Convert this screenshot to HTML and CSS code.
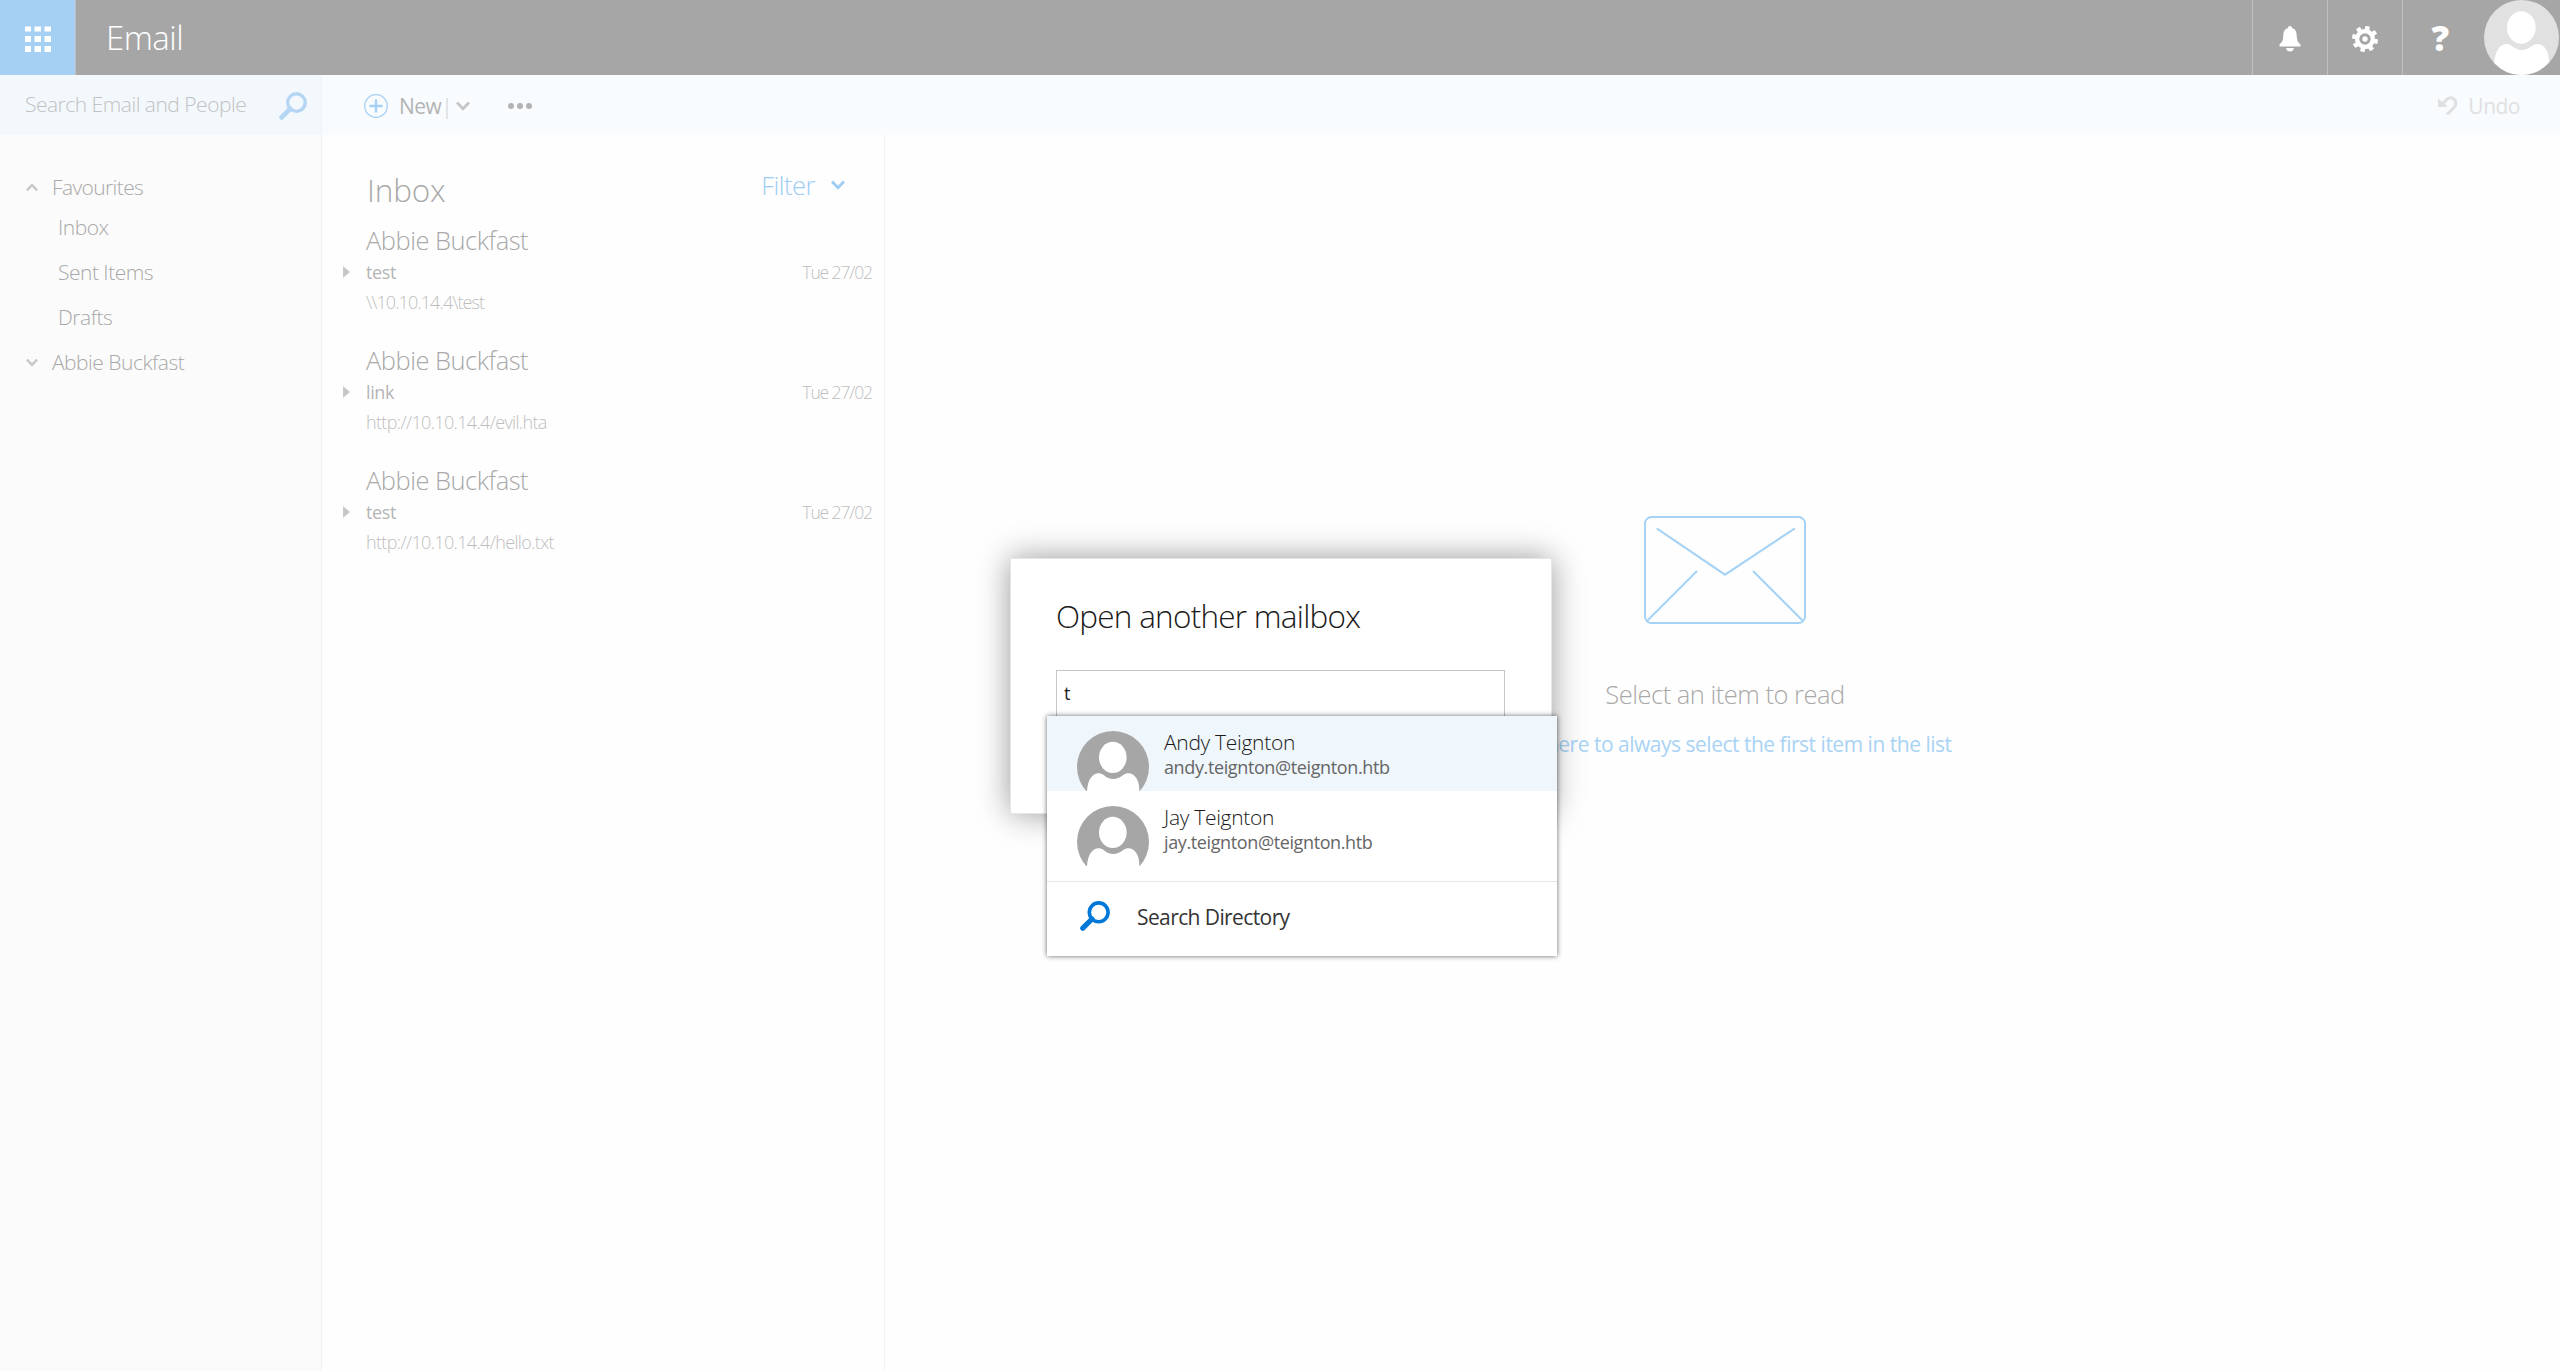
FILE: index.html
```html
<!DOCTYPE html>
<html lang="en-GB">
<head>
<meta charset="utf-8">
<title>Email</title>
<link rel="stylesheet" href="styles.css">
</head>
<body>
<svg class="defs" aria-hidden="true">
  <symbol id="person" viewBox="0 0 75 75">
    <circle cx="37.5" cy="37.5" r="37.5" fill="currentColor"/>
    <g fill="#fff">
      <ellipse cx="37.3" cy="27.5" rx="14.4" ry="16.2"/>
      <path d="M10.4 63C11 52 15 44 23 44C28 44 30 50 37.8 50C45.5 50 48 44 53 44C61 44 65 52 65 62A37.5 37.5 0 0 1 37.5 75A37.5 37.5 0 0 1 10.4 63Z"/>
    </g>
  </symbol>
  <symbol id="magnifier" viewBox="0 0 30 30">
    <circle cx="18.7" cy="11.3" r="9.4" fill="none" stroke="currentColor" stroke-width="3.6"/>
    <path d="M12 18L2.8 27.2" stroke="currentColor" stroke-width="5.2" stroke-linecap="round"/>
  </symbol>
  <symbol id="chevron" viewBox="0 0 14 10">
    <path d="M1 1.5L7 7.8L13 1.5" fill="none" stroke="currentColor" stroke-width="2.8"/>
  </symbol>
</svg>

<header class="topbar">
  <div class="launcher">
    <svg width="26" height="26" viewBox="0 0 26 26" fill="#fff"><path d="M0 .5h6v5H0zM9.5 .5h6.5v5H9.5zM19.5 .5h6.500v5H19.5zM0 10h6v6H0zM9.5 10h6.5v6H9.5zM19.5 10h6.5v6H19.5zM0 20h6v6H0zM9.5 20h6.5v6H9.5zM19.5 20h6.5v6H19.5z"/></svg>
  </div>
  <h1 class="app-name">Email</h1>
  <div class="top-action">
    <svg width="22" height="26" viewBox="0 0 22 26" fill="#fff"><path d="M11 0C12.6 0 13 1.2 13 2C16.5 3 17.5 6 17.7 9C18 14.5 18.5 16 21.5 18.5V20.5H.5V18.5C3.5 16 4 14.5 4.3 9C4.5 6 5.5 3 9 2C9 1.2 9.4 0 11 0ZM7 22H15C14.5 24.5 13 25.5 11 25.5S7.5 24.5 7 22Z"/></svg>
  </div>
  <div class="top-action">
    <svg width="26" height="26" viewBox="-13 -13 26 26"><g fill="#fff" transform="rotate(12)"><g id="teeth"><rect x="-2.3" y="-13" width="4.6" height="26"/><rect x="-13" y="-2.3" width="26" height="4.6"/></g><use href="#teeth" transform="rotate(45)"/><circle r="10"/></g><circle r="4.2" fill="none" stroke="#a6a6a6" stroke-width="3"/></svg>
  </div>
  <div class="top-action help">?</div>
  <svg class="me"><use href="#person"/></svg>
</header>

<div class="commandbar">
  <div class="search"><span>Search Email and People</span><svg class="search-icon"><use href="#magnifier"/></svg></div>
  <div class="commands">
    <svg width="24" height="24" viewBox="0 0 24 24" fill="none" stroke="#a6d0f3"><circle cx="12" cy="12" r="11.3" stroke-width="1.2"/><path d="M5.5 12H18.5M12 5.5V18.5" stroke-width="2.4"/></svg>
    <span class="new">New</span>
    <span class="split"></span>
    <svg class="chev"><use href="#chevron"/></svg>
    <svg class="more" width="24" height="6" viewBox="0 0 24 6" fill="#b3b3b3"><circle cx="3" cy="3" r="3"/><circle cx="12" cy="3" r="3"/><circle cx="21" cy="3" r="3"/></svg>
    <div class="undo">
      <svg width="20" height="20" viewBox="0 0 20 20" fill="none" stroke="#e0e0e0" stroke-width="3"><path d="M3 9.5L8 4.2C10.5 1.2 14 1 16.2 3.2C18.5 5.8 18 9 16 11.5L9 18.5"/><path d="M0 2.5V11H9.5L6.500 7.500L3.500 5.500Z" fill="#e0e0e0" stroke="none"/></svg>
      <span>Undo</span>
    </div>
  </div>
</div>

<div class="workspace">
  <nav class="folders">
    <div class="group first"><svg class="chev small up"><use href="#chevron"/></svg>Favourites</div>
    <a class="folder">Inbox</a>
    <a class="folder">Sent Items</a>
    <a class="folder">Drafts</a>
    <div class="group"><svg class="chev small"><use href="#chevron"/></svg>Abbie Buckfast</div>
  </nav>

  <section class="list">
    <div class="list-head">
      <h2>Inbox</h2>
      <div class="filter">Filter<svg class="chev"><use href="#chevron"/></svg></div>
    </div>
    <article class="mail">
      <div class="from">Abbie Buckfast</div>
      <div class="subject-row"><i class="expand"></i><span class="subject">test</span><time>Tue 27/02</time></div>
      <div class="preview share">\\10.10.14.4\test</div>
    </article>
    <article class="mail">
      <div class="from">Abbie Buckfast</div>
      <div class="subject-row"><i class="expand"></i><span class="subject">link</span><time>Tue 27/02</time></div>
      <div class="preview">http://10.10.14.4/evil.hta</div>
    </article>
    <article class="mail">
      <div class="from">Abbie Buckfast</div>
      <div class="subject-row"><i class="expand"></i><span class="subject">test</span><time>Tue 27/02</time></div>
      <div class="preview">http://10.10.14.4/hello.txt</div>
    </article>
  </section>

  <main class="reading">
    <svg class="envelope" width="162" height="108" viewBox="0 0 162 108" fill="none" stroke="#a6d3f5" stroke-width="2"><rect x="1" y="1" width="160" height="106" rx="6.5"/><path d="M12.7 12.3L81 58.7L151 12.3M3 105L53 55M109 55L159 105"/></svg>
    <p class="empty-title">Select an item to read</p>
    <a class="empty-link">Click here to always select the first item in the list</a>
  </main>
</div>

<div class="dialog">
  <h3>Open another mailbox</h3>
  <div class="field">t</div>
</div>

<div class="suggestions">
  <div class="person selected">
    <svg class="face"><use href="#person"/></svg>
    <div><div class="name">Andy Teignton</div><div class="address">andy.teignton@teignton.htb</div></div>
  </div>
  <div class="person">
    <svg class="face"><use href="#person"/></svg>
    <div><div class="name">Jay Teignton</div><div class="address">jay.teignton@teignton.htb</div></div>
  </div>
  <div class="directory"><svg class="search-icon"><use href="#magnifier"/></svg>Search Directory</div>
</div>
</body>
</html>
```
FILE: styles.css
```css
* { box-sizing: border-box; }
body {
  margin: 0;
  height: 1371px;
  display: flex;
  flex-direction: column;
  overflow: hidden;
  position: relative;
  background: #fefefe;
  color: #a9a9a9;
  font-family: "Open Sans", "Noto Sans", sans-serif;
  font-size: 21px;
  font-weight: 300;
  letter-spacing: -0.5px;
  white-space: nowrap;
}
h1, h2, h3, p { margin: 0; font-weight: inherit; }
svg { display: block; flex: none; }
.defs { position: absolute; width: 0; height: 0; }
.search-icon { width: 30px; height: 30px; }
.chev { width: 14px; height: 10px; }
.chev.small { width: 12px; height: 9px; }
.chev.up { transform: rotate(180deg); }

.topbar { height: 75px; display: flex; background: #a6a6a6; color: #fff; }
.launcher {
  width: 76px;
  display: flex;
  align-items: center;
  padding: 2px 0 0 25px;
  background: #a6d0f3;
  border-right: 1px solid #c0c0c0;
}
.app-name {
  flex: 1;
  padding-left: 30px;
  font-size: 33px;
  line-height: 75px;
}
.top-action {
  width: 75px;
  display: flex;
  align-items: center;
  justify-content: center;
  padding-top: 2px;
  border-left: 1px solid #c0c0c0;
}
.help { font-size: 35px; font-weight: 800; padding: 0 0 1px; }
.me { width: 75px; height: 75px; margin: 0 1px 0 7px; color: #e1e1e1; }

.commandbar { height: 60px; display: flex; background: #f8fcff; }
.search {
  width: 322px;
  display: flex;
  align-items: center;
  justify-content: space-between;
  padding: 0 14px 2px 25px;
  background: #f3f8fd;
  border-right: 1px solid #eef3f7;
  color: #c2c2c2;
}
.search .search-icon { width: 28px; height: 28px; margin-top: 3px; color: #b5d6f3; }
.commands { flex: 1; display: flex; align-items: center; padding: 2px 40px 0 42px; }
.new { margin-left: 11px; font-weight: 400; color: #b3b3b3; width: 47px; }
.split { width: 2px; height: 21px; margin: 5px 8px 0 0; background: #e2e4e5; }
.commands .chev { color: #c6c6c6; }
.more { margin-left: 38px; }
.undo {
  margin-left: auto;
  display: flex;
  align-items: center;
  gap: 10px;
  color: #e0e0e0;
  font-weight: 400;
}

.workspace { flex: 1; display: flex; }
.folders { width: 322px; padding-top: 35px; background: #fbfbfb; border-right: 1px solid #f2f2f2; }
.group { height: 45px; display: flex; align-items: center; gap: 14px; padding: 0 0 1px 26px; }
.group .chev { color: #c8c8c8; margin-top: 1px; }
.group.first { height: 35px; letter-spacing: -0.6px; }
.folder { display: block; padding-left: 58px; line-height: 45px; }

.list { width: 563px; border-right: 1px solid #f2f2f2; }
.list-head { height: 90px; display: flex; justify-content: space-between; padding: 30px 39px 0 45px; line-height: 40px; }
.list-head h2 { font-size: 31.5px; letter-spacing: -0.2px; padding-top: 5px; }
.filter { display: flex; align-items: center; height: 40px; gap: 16px; font-size: 25.5px; color: #9dcdf4; }
.mail { height: 120px; padding-left: 44px; }
.from { font-size: 25.5px; line-height: 30px; }
.subject-row { display: flex; align-items: center; height: 34px; margin-left: -23px; padding-right: 12px; font-size: 18px; }
.expand { margin-right: 16px; border-left: 7px solid #c8c8c8; border-top: 6.5px solid transparent; border-bottom: 6.5px solid transparent; }
.subject { flex: 1; font-weight: 400; letter-spacing: -0.4px; color: #b5b5b5; }
.subject-row time { font-size: 17.5px; letter-spacing: -1.1px; color: #bebebe; }
.preview { font-size: 18px; line-height: 26px; color: #bebebe; letter-spacing: -0.65px; }
.preview.share { letter-spacing: -0.9px; }

.reading { flex: 1; display: flex; flex-direction: column; align-items: center; padding: 381px 0 0 5px; line-height: 50px; }
.empty-title { margin-top: 45px; font-size: 25.5px; letter-spacing: -0.5px; }
.empty-link { color: #a9d3f5; letter-spacing: -0.49px; font-weight: 400; }

.dialog {
  position: absolute;
  left: 1010px;
  top: 558px;
  width: 542px;
  height: 256px;
  padding: 36px 46px 0 45px;
  background: #fff;
  border: 1px solid #e6e6e6;
  box-shadow: 0 0 30px rgba(0, 0, 0, 0.4);
  color: #1a1a1a;
}
.dialog h3 { font-size: 31.5px; line-height: 42px; letter-spacing: -0.75px; }
.field {
  height: 48px;
  margin-top: 33px;
  padding-left: 7px;
  border: 1px solid #c6c6c6;
  font-size: 18px;
  font-weight: 400;
  line-height: 44px;
}
.suggestions {
  position: absolute;
  left: 1047px;
  top: 716px;
  width: 510px;
  height: 240px;
  background: #fff;
  box-shadow: 0 0 5px rgba(0, 0, 0, 0.6);
  color: #1a1a1a;
}
.person { height: 75px; display: flex; gap: 15px; padding: 15px 0 0 30px; overflow: hidden; }
.person.selected { background: #eff6fc; }
.face { width: 72px; height: 72px; color: #a6a6a6; }
.name { line-height: 24px; margin-top: -1px; letter-spacing: -0.3px; }
.address { margin-top: 1px; font-size: 18px; line-height: 24px; font-weight: 400; letter-spacing: -0.38px; color: #666; }
.directory {
  height: 75px;
  margin-top: 15px;
  display: flex;
  align-items: center;
  gap: 27px;
  padding: 0 0 4px 33px;
  border-top: 1px solid #e6e6e6;
  color: #333;
  font-weight: 400;
  letter-spacing: -0.6px;
}
.directory .search-icon { color: #0078d7; margin-top: -2px; }
```
